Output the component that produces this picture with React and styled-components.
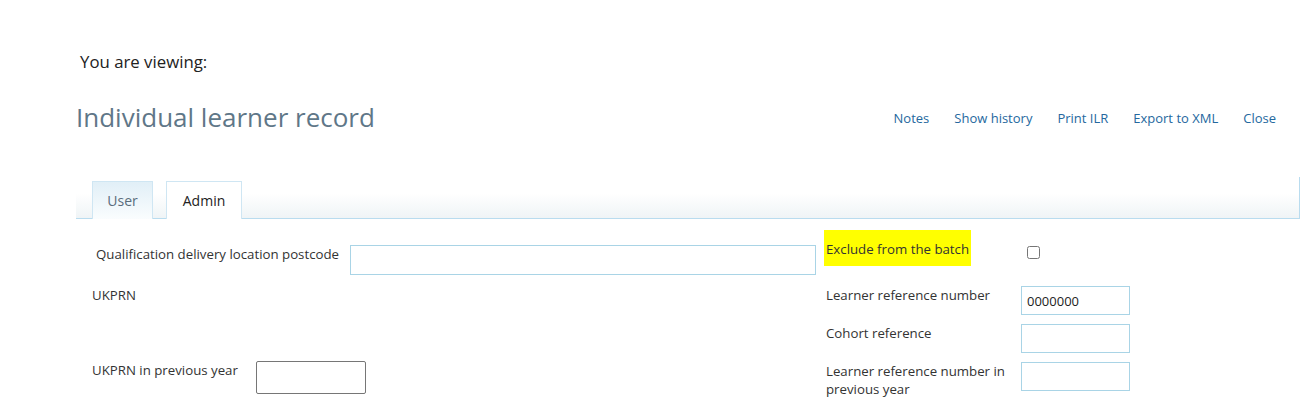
import React from "react";
import styled, { createGlobalStyle } from "styled-components";

const GlobalStyle = createGlobalStyle`
  body { margin: 0; background: #fff; font-family: "Open Sans", "Noto Sans", sans-serif; color: #333; }
`;

const Page = styled.div`
  width: 1310px; height: 403px; overflow: hidden; padding-left: 76px; box-sizing: border-box;
`;

const Viewing = styled.div`
  padding: 51px 0 0 4px; font-size: 16.8px; color: #222; line-height: 22px;
`;

const Header = styled.div`
  display: flex; justify-content: space-between; align-items: center; padding-right: 34px; margin-top: 23px; height: 42px;
`;

const Title = styled.h1`
  margin: 0; font-size: 26px; font-weight: normal; color: #5f7788;
`;

const Nav = styled.nav`
  display: flex; gap: 25px; padding-top: 2px;
`;

const NavLink = styled.a`
  font-size: 13px; color: #25689e; text-decoration: none; cursor: pointer;
`;

const TabBar = styled.div`
  display: flex; align-items: flex-end; gap: 13px; width: 1224px; height: 42px; margin-top: 39px; padding-left: 16px; box-sizing: border-box;
  border-right: 1px solid #b9dcef; border-bottom: 1px solid #b9dcef;
  background: linear-gradient(#fff 40%, #eff4f6);
`;

const Tab = styled.div`
  height: 38px; display: flex; align-items: center; justify-content: center; box-sizing: border-box;
  width: ${(p) => p.w}px; font-size: 14px; margin-bottom: -1px;
  border: 1px solid #cfe6f3; border-bottom: none;
  color: ${(p) => (p.active ? "#5a6d7c" : "#222")};
  background: ${(p) => (p.active ? "linear-gradient(#e1eff7, #fafdfe)" : "#fff")};
`;

const Form = styled.div`
  display: flex; padding-top: 26px;
`;

const Column = styled.div`
  display: flex; flex-direction: column; gap: ${(p) => p.gap}px; width: ${(p) => p.w}px; padding-left: ${(p) => p.pl}px;
`;

const Row = styled.div`
  display: flex; align-items: flex-start; height: ${(p) => p.h}px;
`;

const Label = styled.label`
  font-size: 13.25px; color: #333; line-height: 18px; width: ${(p) => p.w}px; flex-shrink: 0;
  padding-left: ${(p) => p.pl || 0}px; margin-top: ${(p) => p.mt || 0}px;
`;

const Highlight = styled.span`
  display: inline-block; background: #ffff00; padding: 10px 2px 8px 2px; margin-left: -2px; color: #333;
`;

const TextInput = styled.input`
  width: ${(p) => p.w}px; height: ${(p) => p.h || 29}px; box-sizing: border-box; font: 13px "Open Sans", sans-serif; color: #222;
  border: 1px solid ${(p) => (p.plain ? "#767676" : "#a9d4e6")}; border-radius: ${(p) => (p.plain ? 2 : 0)}px;
  padding: 0 5px; margin: 0; outline: none;
`;

const Check = styled.input`
  width: 13px; height: 13px; margin: 1px 0 0 0;
`;

export default function App() {
  return (
    <>
      <GlobalStyle />
      <Page>
        <Viewing>You are viewing:</Viewing>
        <Header>
          <Title>Individual learner record</Title>
          <Nav>
            <NavLink>Notes</NavLink>
            <NavLink>Show history</NavLink>
            <NavLink>Print ILR</NavLink>
            <NavLink>Export to XML</NavLink>
            <NavLink>Close</NavLink>
          </Nav>
        </Header>
        <TabBar>
          <Tab active w={61}>User</Tab>
          <Tab w={76}>Admin</Tab>
        </TabBar>
        <Form>
          <Column w={734} pl={16} gap={0}>
            <Row h={41}>
              <Label w={254} pl={4}>Qualification delivery location postcode</Label>
              <TextInput w={466} h={30} />
            </Row>
            <Row h={75}>
              <Label w={160}>UKPRN</Label>
            </Row>
            <Row h={33}>
              <Label w={164}>UKPRN in previous year</Label>
              <TextInput w={110} h={33} plain />
            </Row>
          </Column>
          <Column w={310} pl={0} gap={9}>
            <Row h={32}>
              <Label w={201} mt={-15}><Highlight>Exclude from the batch</Highlight></Label>
              <Check type="checkbox" />
            </Row>
            <Row h={29}>
              <Label w={195}>Learner reference number</Label>
              <TextInput w={109} defaultValue="0000000" />
            </Row>
            <Row h={29}>
              <Label w={195}>Cohort reference</Label>
              <TextInput w={109} />
            </Row>
            <Row h={29}>
              <Label w={195}>Learner reference number in previous year</Label>
              <TextInput w={109} />
            </Row>
          </Column>
        </Form>
      </Page>
    </>
  );
}
